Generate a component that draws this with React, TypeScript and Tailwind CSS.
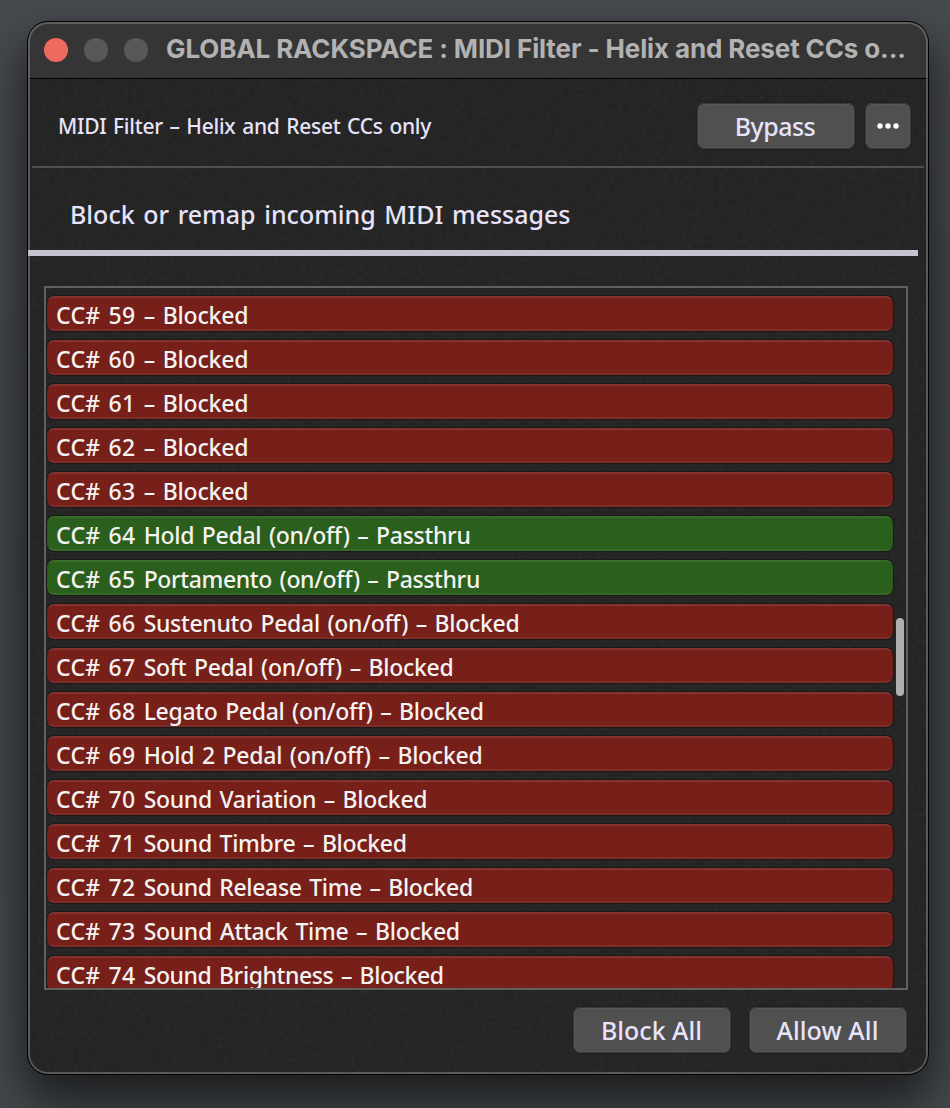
import React from "react";

type Mode = "Blocked" | "Passthru";

const rows: { cc: number; name: string; mode: Mode; tracking: string }[] = [
  { cc: 59, name: "", mode: "Blocked", tracking: "tracking-[-0.2px]" },
  { cc: 60, name: "", mode: "Blocked", tracking: "tracking-[-0.2px]" },
  { cc: 61, name: "", mode: "Blocked", tracking: "tracking-[-0.2px]" },
  { cc: 62, name: "", mode: "Blocked", tracking: "tracking-[-0.2px]" },
  { cc: 63, name: "", mode: "Blocked", tracking: "tracking-[-0.2px]" },
  { cc: 64, name: "Hold Pedal (on/off) ", mode: "Passthru", tracking: "tracking-[-0.3px]" },
  { cc: 65, name: "Portamento (on/off) ", mode: "Passthru", tracking: "tracking-[-0.37px]" },
  { cc: 66, name: "Sustenuto Pedal (on/off) ", mode: "Blocked", tracking: "tracking-[-0.31px]" },
  { cc: 67, name: "Soft Pedal (on/off) ", mode: "Blocked", tracking: "tracking-[-0.28px]" },
  { cc: 68, name: "Legato Pedal (on/off) ", mode: "Blocked", tracking: "tracking-[-0.32px]" },
  { cc: 69, name: "Hold 2 Pedal (on/off) ", mode: "Blocked", tracking: "tracking-[-0.27px]" },
  { cc: 70, name: "Sound Variation ", mode: "Blocked", tracking: "tracking-[-0.32px]" },
  { cc: 71, name: "Sound Timbre ", mode: "Blocked", tracking: "tracking-[-0.31px]" },
  { cc: 72, name: "Sound Release Time ", mode: "Blocked", tracking: "tracking-[-0.35px]" },
  { cc: 73, name: "Sound Attack Time ", mode: "Blocked", tracking: "tracking-[-0.3px]" },
  { cc: 74, name: "Sound Brightness ", mode: "Blocked", tracking: "tracking-[-0.41px]" },
];

const modeStyle: Record<Mode, string> = {
  Blocked: "bg-[#771f19] border-x-[#701f1a] border-t-[#85332d] border-b-[#7f2c26]",
  Passthru: "bg-[#2b5f1d] border-x-[#2a591d] border-t-[#386d28] border-b-[#346a25]",
};

const button =
  "flex h-[46px] shrink-0 items-center justify-center rounded-[8px] bg-[#505050] text-[#e6e3fa] shadow-[0_0_0_1px_#1f1f1f,inset_0_0_0_1px_#3a3a3a,inset_0_0_0_2px_#575757]";

function Grain() {
  return (
    <svg className="pointer-events-none absolute inset-0 h-full w-full opacity-[0.05]" aria-hidden="true">
      <filter id="grain">
        <feTurbulence type="fractalNoise" baseFrequency="0.22" numOctaves="2" seed="4" />
        <feColorMatrix type="saturate" values="0" />
      </filter>
      <rect width="100%" height="100%" filter="url(#grain)" />
    </svg>
  );
}

export default function App() {
  return (
    <div className="h-[1108px] w-[950px] overflow-hidden bg-[linear-gradient(#474a4f,#42464b_50%,#45494d)] pt-[22px] pl-[28px] font-['Noto_Sans',sans-serif] font-medium whitespace-nowrap">
      <div className="relative flex h-[1052px] w-[900px] flex-col overflow-hidden rounded-[20px] bg-[#222222] shadow-[0_0_0_1px_#000,0_24px_50px_4px_rgba(0,0,0,0.62)]">
        <Grain />
        <header className="relative flex h-[57px] shrink-0 items-center border-b border-black bg-[#353535] pl-4">
          <div className="flex gap-4">
            <span className="size-6 rounded-full bg-[#ed6a5e]" />
            <span className="size-6 rounded-full bg-[#585858]" />
            <span className="size-6 rounded-full bg-[#585858]" />
          </div>
          <h1 className="ml-[18px] pb-[3px] font-['Inter',sans-serif] text-[26px] font-bold tracking-[-0.12px] text-[#b2b2b2]">
            GLOBAL RACKSPACE : MIDI Filter - Helix and Reset CCs o...
          </h1>
        </header>
        <div className="pointer-events-none absolute inset-0 rounded-[20px] shadow-[inset_0_0_0_2px_rgba(140,140,140,0.5)]" />

        <div className="relative mx-1 flex h-[89px] shrink-0 items-center border-b-2 border-[#505050] pt-[7px] pr-[13px] pl-[26px]">
          <span className="mr-auto pt-[2px] text-[21px] tracking-[-0.28px] text-[#e6e3fa] [word-spacing:1.5px]">
            MIDI Filter – Helix and Reset CCs only
          </span>
          <button className={`${button} w-[158px] pt-[2px] pr-[2px] text-[25px] tracking-[-0.55px]`}>Bypass</button>
          <button className={`${button} ml-[10px] w-[46px]`} aria-label="More">
            <svg width="22" height="6" viewBox="0 0 22 6" fill="#fff">
              <circle cx="3" cy="3" r="2.7" />
              <circle cx="11" cy="3" r="2.7" />
              <circle cx="19" cy="3" r="2.7" />
            </svg>
          </button>
        </div>

        <div className="relative mr-[10px] flex h-[88px] shrink-0 items-center border-b-[6px] border-[#c5c2d1] pt-[11px] pl-[42px] text-[25px] text-[#e6e3fa]">
          <h2 className="[word-spacing:2.1px]">Block or remap incoming MIDI messages</h2>
        </div>

        <div className="relative mt-[30px] mr-5 ml-4 flex h-[704px] shrink-0 justify-between overflow-hidden border-2 border-[#606060] pr-0.5">
          <ul className="ml-px flex flex-col gap-[9px] pt-[8px]">
            {rows.map((row) => (
              <li
                key={row.cc}
                className={`flex h-[35px] w-[846px] shrink-0 items-center rounded-[7px] border-x border-y-2 pt-[3px] pl-[8px] text-[23px] text-[#f5f3f2] shadow-[0_0_0_1px_#191b1b] [word-spacing:2px] ${modeStyle[row.mode]}`}
              >
                <span className={row.tracking}>
                  <span className="tracking-[0.25px]">{`CC# ${row.cc} `}</span>
                  {`${row.name}– ${row.mode}`}
                </span>
              </li>
            ))}
          </ul>
          <span className="mt-[330px] h-[78px] w-2 rounded-full bg-[#b0b0b0]" />
        </div>

        <footer className="relative mt-[17px] mr-[21px] flex justify-end gap-[18px] text-[25px] [word-spacing:1.5px]">
          <button className={`${button} w-[158px] pt-[2px] pr-px`}>Block All</button>
          <button className={`${button} w-[158px] pt-[2px] pr-px tracking-[0.1px]`}>Allow All</button>
        </footer>
      </div>
    </div>
  );
}
